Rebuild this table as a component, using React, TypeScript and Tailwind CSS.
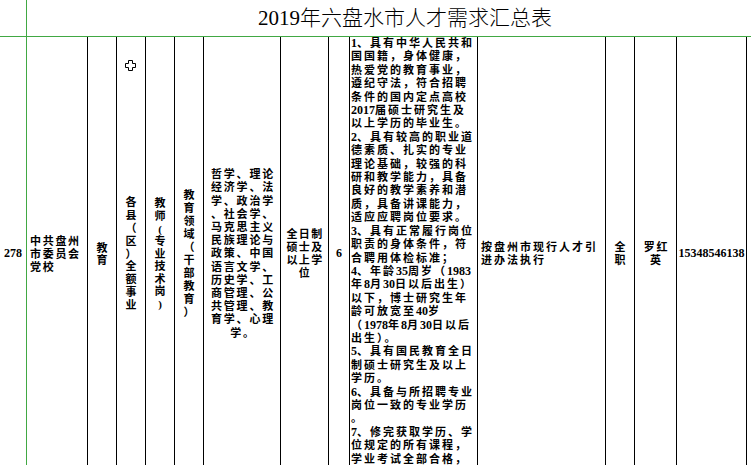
const CN = '"Liberation Serif", "Noto Sans CJK SC", serif';

const requirements = [
  "1、具有中华人民共和",
  "国国籍，身体健康，",
  "热爱党的教育事业，",
  "遵纪守法，符合招聘",
  "条件的国内定点高校",
  "2017届硕士研究生及",
  "以上学历的毕业生。",
  "2、具有较高的职业道",
  "德素质、扎实的专业",
  "理论基础，较强的科",
  "研和教学能力，具备",
  "良好的教学素养和潜",
  "质，具备讲课能力，",
  "适应应聘岗位要求。",
  "3、具有正常履行岗位",
  "职责的身体条件，符",
  "合聘用体检标准；",
  "4、年龄35周岁（1983",
  "年8月30日以后出生）",
  "以下，博士研究生年",
  "龄可放宽至40岁",
  "（1978年8月30日以后",
  "出生）。",
  "5、具有国民教育全日",
  "制硕士研究生及以上",
  "学历。",
  "6、具备与所招聘专业",
  "岗位一致的专业学历",
  "。",
  "7、修完获取学历、学",
  "位规定的所有课程，",
  "学业考试全部合格，",
  "毕业时获得所学相关",
  "专业的学历、学位证",
];

const majors = [
  "哲学、理论",
  "经济学、法",
  "学、政治学",
  "、社会学、",
  "马克思主义",
  "民族理论与",
  "政策、中国",
  "语言文学、",
  "历史学、工",
  "商管理、公",
  "共管理、教",
  "育学、心理",
  "学。",
];

// digits are set in the serif at their own width, the CJK glyphs get wide spacing
const Line = ({ text }: { text: string }) => (
  <div className="whitespace-nowrap">
    {text.split(/(\d+)/).map((part, i) =>
      /^\d+$/.test(part) ? (
        <span key={i} className="text-[12px] tracking-normal">
          {part}
        </span>
      ) : (
        <span key={i}>{part}</span>
      )
    )}
  </div>
);

const Lines = ({ lines, className = "" }: { lines: string[]; className?: string }) => (
  <div className={className}>
    {lines.map((l, i) => (
      <Line key={i} text={l} />
    ))}
  </div>
);

const Stack = ({ text, leading }: { text: string; leading: string }) => (
  <div className={`flex flex-col items-center ${leading}`}>
    {Array.from(text).map((c, i) => (
      <span key={i}>{c}</span>
    ))}
  </div>
);

const Cursor = () => (
  <svg className="absolute left-[125px] top-[60px]" width="11" height="11" viewBox="0 0 11 11">
    <path
      d="M3.5 0.5h4v3h3v4h-3v3h-4v-3h-3v-4h3z"
      fill="#fff"
      stroke="#000"
      strokeWidth="1"
    />
  </svg>
);

export default function App() {
  const cell = "border-r border-black flex items-center overflow-hidden";
  return (
    <div
      className="relative w-[751px] h-[465px] overflow-hidden bg-white text-black"
      style={{ fontFamily: CN }}
    >
      {/* title row */}
      <div className="flex h-[37px] border-b border-[#41a843]">
        <div className="w-[27px] shrink-0 border-r border-[#41a843]" />
        <div className="flex-1 flex items-center pl-[231px] pt-[1px]">
          <span className="text-[21px] font-light whitespace-nowrap">2019年六盘水市人才需求汇总表</span>
        </div>
      </div>

      {/* data row */}
      <div className="grid h-[434px] grid-cols-[27px_61px_29px_29px_29px_29px_77px_48px_21px_128px_128px_29px_42px_70px_1fr] text-[11px] font-bold leading-[13.4px]">
        <div className="border-r border-[#41a843] flex items-center justify-center">
          <span className="text-[12px]">278</span>
        </div>
        <div className={`${cell} pl-[3px]`}>
          <Lines lines={["中共盘州", "市委员会", "党校"]} className="leading-[13px] tracking-[1.7px]" />
        </div>
        <div className={`${cell} justify-center`}>
          <Stack text="教育" leading="leading-[12.5px]" />
        </div>
        <div className={`${cell} justify-center`}>
          <Stack text="各县（区）全额事业" leading="leading-[12.9px]" />
        </div>
        <div className={`${cell} justify-center`}>
          <Stack text="教师(专业技术岗)" leading="leading-[12.6px]" />
        </div>
        <div className={`${cell} justify-center`}>
          <Stack text="教育领域（干部教育）" leading="leading-[13px]" />
        </div>
        <div className={`${cell} justify-center`}>
          <Lines lines={majors} className="text-center leading-[13.2px] tracking-[1.8px] pl-[2px]" />
        </div>
        <div className={`${cell} justify-center`}>
          <Lines lines={["全日制", "硕士及", "以上学", "位"]} className="text-center leading-[12.8px] tracking-[1.3px] pl-[1px]" />
        </div>
        <div className={`${cell} justify-center`}>
          <span className="text-[12px]">6</span>
        </div>
        <div className="border-r border-black overflow-hidden pl-[1px]">
          <Lines lines={requirements} className="tracking-[2px]" />
        </div>
        <div className={`${cell} pl-[3px]`}>
          <Lines lines={["按盘州市现行人才引", "进办法执行"]} className="leading-[13px] tracking-[2px]" />
        </div>
        <div className={`${cell} justify-center`}>
          <Lines lines={["全", "职"]} className="text-center leading-[13px]" />
        </div>
        <div className={`${cell} justify-center`}>
          <Lines lines={["罗红", "英"]} className="text-center leading-[13px] tracking-[1.8px] pl-[2px]" />
        </div>
        <div className={`${cell} justify-center`}>
          <span className="text-[12px]">15348546138</span>
        </div>
        <div />
      </div>

      <Cursor />
    </div>
  );
}
